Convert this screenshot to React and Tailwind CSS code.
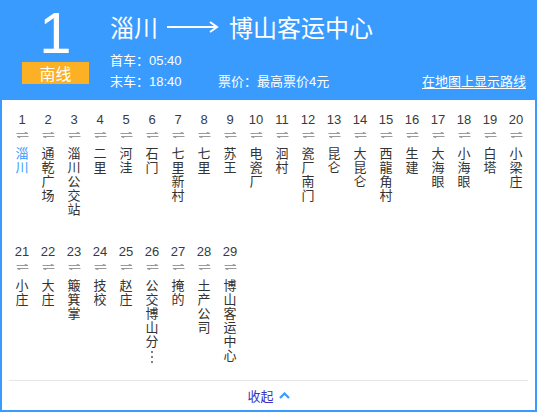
import React from "react";

const stations = [
  "淄川", "通乾广场", "淄川公交站", "二里", "河洼", "石门", "七里新村", "七里", "苏王", "电瓷厂",
  "洄村", "瓷厂南门", "昆仑", "大昆仑", "西龍角村", "生建", "大海眼", "小海眼", "白塔", "小梁庄",
  "小庄", "大庄", "簸箕掌", "技校", "赵庄", "公交博山分", "掩的", "土产公司", "博山客运中心",
];

const FONT = { fontFamily: '"Liberation Sans", "Noto Sans CJK SC", sans-serif' };
const CJK = { fontFamily: '"Noto Sans CJK SC", "Liberation Sans", sans-serif' };

function Exchange() {
  return (
    <svg width="13" height="6" viewBox="0 0 13 6" className="block">
      <path d="M0.5 1.5 H12 L8.5 0" fill="none" stroke="#9a9a9a" strokeWidth="1" />
      <path d="M12.5 4.5 H1 L4.5 6" fill="none" stroke="#9a9a9a" strokeWidth="1" />
    </svg>
  );
}

function Station({ idx, name }) {
  const truncated = idx === 26;
  return (
    <div className="w-[26px] h-[132px] flex flex-col items-center">
      <div className="text-[13px] leading-[16px] text-[#3a3a3a]" style={FONT}>{idx}</div>
      <div className="mt-[4px]"><Exchange /></div>
      <div className="mt-[8px] flex flex-col items-center">
        <div
          className={`w-[13px] text-center break-all text-[13px] leading-[14px] ${idx === 1 ? "text-[#3a9bff]" : "text-[#333]"}`}
          style={CJK}
        >
          {name}
        </div>
        {truncated && (
          <div className="flex flex-col items-center gap-[3px] mt-[3px]">
            <div className="w-[2px] h-[2px] bg-[#555] rounded-full" />
            <div className="w-[2px] h-[2px] bg-[#555] rounded-full" />
            <div className="w-[2px] h-[2px] bg-[#555] rounded-full" />
          </div>
        )}
      </div>
    </div>
  );
}

export default function App() {
  return (
    <div className="w-[537px] h-[412px] bg-[#3a9bff] px-[2px] pb-[2px] flex flex-col overflow-hidden" style={CJK}>
      <div className="h-[100px] flex items-start text-white shrink-0">
        <div className="ml-[20px] w-[67px] pt-[4px] flex flex-col items-center">
          <div className="text-[58px] leading-[58px] text-white" style={FONT}>1</div>
          <div className="w-[67px] h-[22px] bg-[#fcb023] flex items-center justify-center text-[16px] leading-[22px] text-white">
            南线
          </div>
        </div>
        <div className="ml-[21px] flex-1 pt-[13px] pr-[9px]">
          <div className="flex items-center text-[24px] leading-[28px]">
            <span>淄川</span>
            <svg width="53" height="14" viewBox="0 0 53 14" className="ml-[8px] mr-[10px]">
              <path d="M1 7 H50" stroke="#fff" strokeWidth="2" />
              <path d="M44 2 L51 7 L44 12" fill="none" stroke="#fff" strokeWidth="2" />
            </svg>
            <span>博山客运中心</span>
          </div>
          <div className="mt-[9px] text-[13px] leading-[20px]">首车：<span style={FONT}>05:40</span></div>
          <div className="flex text-[13px] leading-[20px]">
            <span className="w-[108px]">末车：<span style={FONT}>18:40</span></span>
            <span>票价：最高票价<span style={FONT}>4</span>元</span>
            <span className="ml-auto underline underline-offset-2">在地图上显示路线</span>
          </div>
        </div>
      </div>
      <div className="flex-1 bg-white flex flex-col">
        <div className="pt-[12px] pl-[7px] flex flex-wrap w-[533px]">
          {stations.map((s, i) => (
            <Station key={i} idx={i + 1} name={s} />
          ))}
        </div>
        <div className="mt-[4px] mx-[7px] h-px bg-[#e6e6e6]" />
        <div className="h-[29px] flex items-center justify-center gap-[5px]">
          <span className="text-[13px] leading-[16px] text-[#3a33c4]">收起</span>
          <svg width="11" height="7" viewBox="0 0 11 7">
            <path d="M1 6 L5.5 1.5 L10 6" fill="none" stroke="#3a9bff" strokeWidth="2.2" />
          </svg>
        </div>
      </div>
    </div>
  );
}
